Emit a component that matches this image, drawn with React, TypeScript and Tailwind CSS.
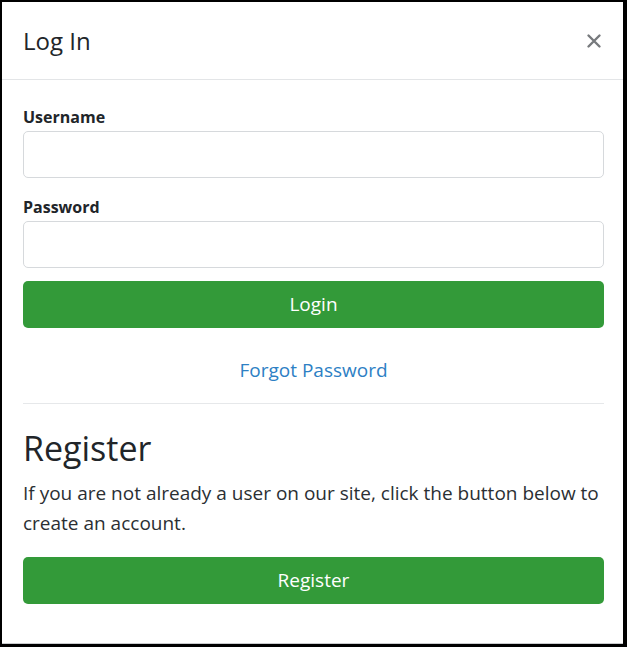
const font = { fontFamily: '"Open Sans", "Noto Sans", Arial, sans-serif' }

function Field({ label, type = 'text' }: { label: string; type?: string }) {
  return (
    <div className="flex flex-col">
      <label className="mb-[4px] text-[16px] font-bold leading-[20px] text-[#212529]">{label}</label>
      <input
        type={type}
        className="h-[47px] w-full rounded-[5px] border border-[#d6d9dc] bg-white px-3 outline-none"
      />
    </div>
  )
}

function CloseIcon() {
  return (
    <svg width="16" height="16" viewBox="0 0 16 16" className="text-[#777a7d]">
      <path d="M2.5 2.5 L13.5 13.5 M13.5 2.5 L2.5 13.5" stroke="currentColor" strokeWidth="2.4" strokeLinecap="round" />
    </svg>
  )
}

export default function App() {
  return (
    <div className="h-[647px] w-[627px] bg-black pl-[2px] pt-[2px]" style={font}>
      <div className="flex h-[642px] w-[621px] flex-col border-b border-[#c9cbcd] bg-white text-[#212529]">
        <header className="flex h-[78px] items-center justify-between border-b border-[#e3e5e7] pl-[21px] pr-[19px]">
          <h5 className="text-[24px] leading-none">Log In</h5>
          <button className="flex h-[20px] w-[20px] items-center justify-center">
            <CloseIcon />
          </button>
        </header>
        <div className="flex flex-col pl-[21px] pr-[19px] pt-[27px]">
          <div className="flex flex-col gap-[19px]">
            <Field label="Username" />
            <Field label="Password" type="password" />
          </div>
          <button className="mt-[13px] h-[47px] w-full rounded-[5px] bg-[#339a39] text-[19px] text-white">
            Login
          </button>
          <a className="mt-[30px] self-center text-[19px] leading-[24px] text-[#2d80c4]">Forgot Password</a>
          <div className="mt-[21px] h-px bg-[#e6e8ea]" />
          <h2 className="mt-[24px] text-[34px] font-medium leading-[40px]">Register</h2>
          <p className="mt-[10px] text-[19px] leading-[30px] text-[#2b2f33]">
            If you are not already a user on our site, click the button below to create an account.
          </p>
          <button className="mt-[19px] h-[47px] w-full rounded-[5px] bg-[#339a39] text-[19px] text-white">
            Register
          </button>
        </div>
      </div>
    </div>
  )
}
